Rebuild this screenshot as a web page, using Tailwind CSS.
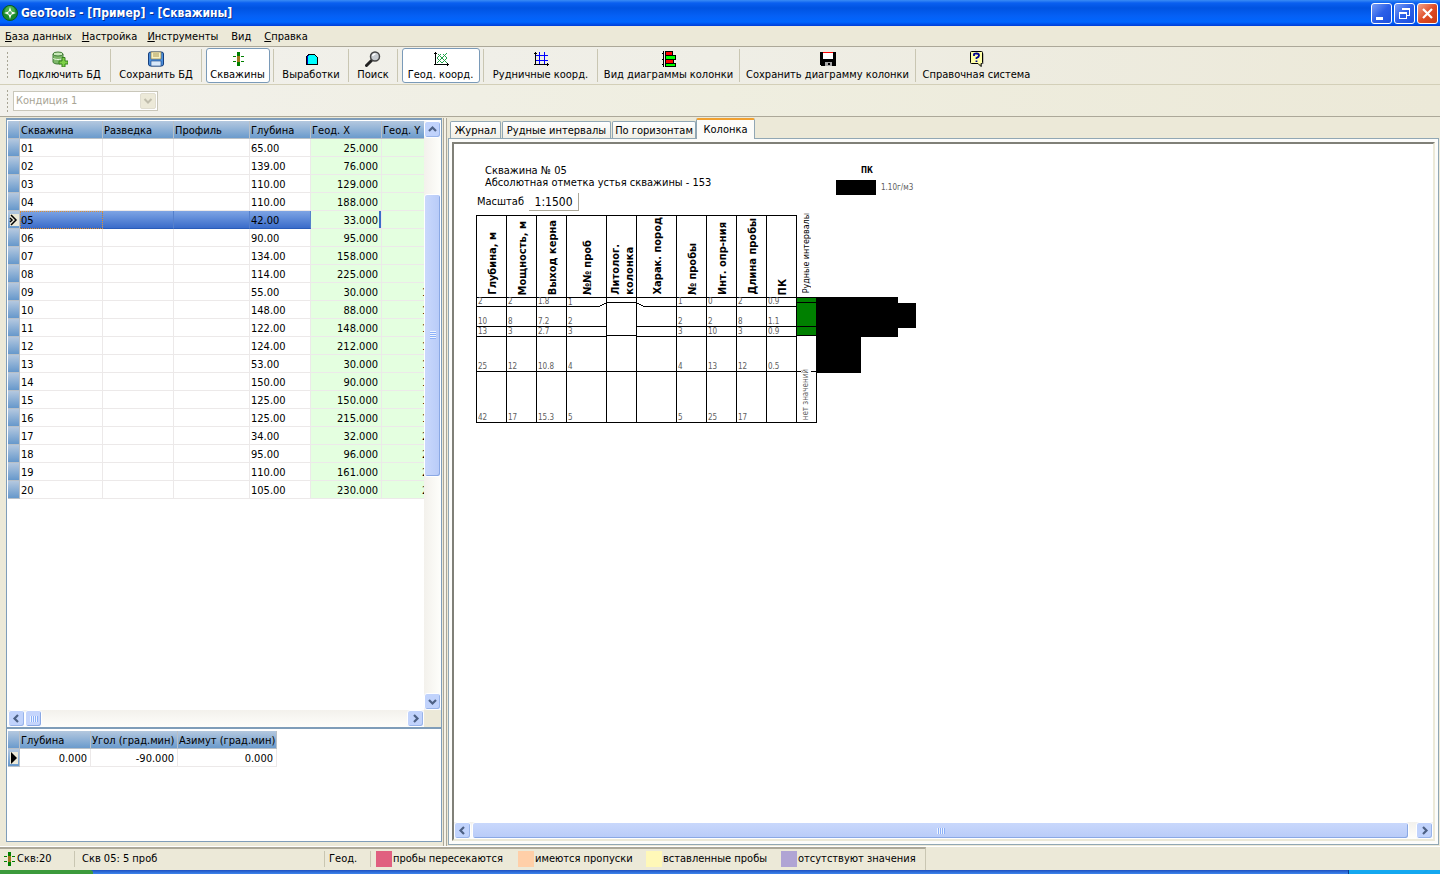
<!DOCTYPE html>
<html lang="ru">
<head>
  <meta charset="UTF-8">
  <title>GeoTools - [Пример] - [Скважины]</title>
  <script src="https://cdn.jsdelivr.net/npm/@tailwindcss/browser@4"></script>
</head>
<body class="h-screen flex flex-col overflow-hidden bg-[#ece9d8] text-black text-[11px] leading-[14px] font-['Tahoma','DejaVu_Sans_Condensed','Noto_Sans',sans-serif]">

  <!-- title bar -->
  <header class="h-[26px] shrink-0 flex items-center pl-0.5 pr-0.5 bg-[linear-gradient(#3a8cf5_0,#0a5ff0_3px,#0053e1_8px,#0560f5_16px,#0066ff_22px,#003dd7_26px)]">
    <svg class="w-4 h-4" viewBox="0 0 16 16"><circle cx="8" cy="8" r="7.5" fill="#1c8a2c" stroke="#0a5a1c"/><circle cx="8" cy="6" r="5" fill="#47b04c"/><path d="M8 2l1.500 4.500L14 8l-4.500 1.500L8 14l-1.500-4.500L2 8l4.500-1.500z" fill="#fff"/><path d="M8 6v4M6 8h4" stroke="#1c8a2c"/></svg>
    <h1 class="ml-[3px] grow text-white text-[12px] leading-4 font-bold whitespace-nowrap [text-shadow:1px_1px_#0a3090]">GeoTools - [Пример] - [Скважины]</h1>
    <div class="flex gap-0.5">
      <button aria-label="Свернуть" class="w-[21px] h-[21px] rounded-[3px] border border-white bg-linear-to-br from-[#7a9cf5] via-[#2c5fe8] to-[#1c50dd]"><svg class="w-[19px] h-[19px]" viewBox="0 0 19 19"><path d="M4 13h7v3H4z" fill="#fff"/></svg></button>
      <button aria-label="Восстановить" class="w-[21px] h-[21px] rounded-[3px] border border-white bg-linear-to-br from-[#7a9cf5] via-[#2c5fe8] to-[#1c50dd]"><svg class="w-[19px] h-[19px]" viewBox="0 0 19 19" shape-rendering="crispEdges" fill="none" stroke="#fff"><path d="M7 6V4.500h7.500V11H12M7 5.500h8"/><path d="M4.500 8.500h7v6h-7zM4 9.500h8"/></svg></button>
      <button aria-label="Закрыть" class="w-[21px] h-[21px] rounded-[3px] border border-white bg-linear-to-br from-[#f0a088] via-[#e04c24] to-[#c83c14]"><svg class="w-[19px] h-[19px]" viewBox="0 0 19 19"><path d="M5 5l9 9M14 5l-9 9" stroke="#fff" stroke-width="2.2"/></svg></button>
    </div>
  </header>

  <!-- menu -->
  <nav class="h-5 shrink-0 flex items-center gap-2.5 pt-0.5 pl-[5px]">
    <a href="#"><u>Б</u>аза данных</a>
    <a href="#"><u>Н</u>астройка</a>
    <a href="#"><u>И</u>нструменты</a>
    <a href="#" class="px-[3px]">Вид</a>
    <a href="#"><u>С</u>правка</a>
  </nav>

  <!-- toolbar -->
  <div class="h-[39px] shrink-0 flex items-stretch pl-1.5 py-[2px] border-t border-b border-t-[#aca899] border-b-[#d3cfb8] bg-linear-to-r from-[#f2f1ec] via-[#efeee6] to-[#ece9d8] whitespace-nowrap">
    <div class="w-[3px] my-0.5 bg-[radial-gradient(circle,#a8a595_1px,transparent_1px)] bg-[size:3px_4px]"></div>
    <button class="w-[102px] flex flex-col items-center justify-end gap-px border-r border-[#c9c6b2]">
      <svg class="w-4 h-4 shrink-0" viewBox="0 0 16 16"><path d="M1 3v8c0 1 2 2 5 2s5-1 5-2V3" fill="#7fb86a" stroke="#3f7a34"/><ellipse cx="6" cy="3" rx="5" ry="2" fill="#c8e8b8" stroke="#3f7a34"/><path d="M1 7c1 2 9 2 10 0" fill="none" stroke="#e8f6e0"/><path d="M10 6.500h3V10h3v3h-3v3h-3v-3H7v-3h3z" fill="#7ed048" stroke="#35801c"/></svg>
      <span>Подключить БД</span>
    </button>
    <button class="w-[91px] flex flex-col items-center justify-end gap-px border-r border-[#c9c6b2]">
      <svg class="w-4 h-4 shrink-0" viewBox="0 0 16 16"><rect x=".5" y="1" width="15" height="14" rx="2" fill="#4a8edc" stroke="#173f7c"/><path d="M3 1h10v7H3z" fill="#f8f0c0" stroke="#806c30" stroke-width=".6"/><path d="M5 3h6M5 5h6" stroke="#a89858"/><path d="M3 10h10v5H3z" fill="#d8e8fa" stroke="#173f7c" stroke-width=".6"/></svg>
      <span>Сохранить БД</span>
    </button>
    <div class="w-[72px] flex justify-center border-r border-[#c9c6b2]">
      <button class="w-16 -my-px flex flex-col items-center justify-end gap-px rounded-[3px] border border-[#7a9ab8] bg-white">
        <svg class="w-4 h-4 shrink-0" viewBox="0 0 16 16" shape-rendering="crispEdges"><path d="M7 1h3v4H7zM7 11h3v4H7zM3 5h3v1H3zM11 5h3v1h-3zM3 10h3v1H3zM11 10h3v1h-3z" fill="#008000"/><path d="M7 5h3v6H7z" fill="#a07820"/></svg>
        <span>Скважины</span>
      </button>
    </div>
    <button class="w-[75px] flex flex-col items-center justify-end gap-px border-r border-[#c9c6b2]">
      <svg class="w-4 h-4 shrink-0" viewBox="0 0 16 16" shape-rendering="crispEdges"><path d="M3 13V6l3-3h5l3 3v7z" fill="#0ff" stroke="#000"/><path d="M4 13V6l2-2" fill="none" stroke="#0000c0"/></svg>
      <span>Выработки</span>
    </button>
    <button class="w-[49px] flex flex-col items-center justify-end gap-px border-r border-[#c9c6b2]">
      <svg class="w-4 h-4 shrink-0" viewBox="0 0 16 16"><path d="M6.500 9.500L1.500 14.500" stroke="#222" stroke-width="3" stroke-linecap="round"/><circle cx="10" cy="5.500" r="4.500" fill="#c8ccd0" stroke="#444" stroke-width="1.500"/><path d="M7.500 5a3 3 0 0 1 3-2" stroke="#fff" fill="none" stroke-width="1.500"/></svg>
      <span>Поиск</span>
    </button>
    <div class="w-[86px] flex justify-center border-r border-[#c9c6b2]">
      <button class="w-[78px] -my-px flex flex-col items-center justify-end gap-px rounded-[3px] border border-[#7a9ab8] bg-white">
        <svg class="w-4 h-4 shrink-0" viewBox="0 0 16 16" shape-rendering="crispEdges"><path d="M2.500 1v13M1 13.500h15M1 2.500h3M14.500 12v3" fill="none" stroke="#000"/><path d="M4 12l10-10M9 12l5-5M4 7l4-4M5 3l9 9M4 7l5 5M10 3l4 4" fill="none" stroke="#20a048"/></svg>
        <span>Геод. коорд.</span>
      </button>
    </div>
    <button class="w-[114px] flex flex-col items-center justify-end gap-px border-r border-[#c9c6b2]">
      <svg class="w-4 h-4 shrink-0" viewBox="0 0 16 16" shape-rendering="crispEdges" fill="none"><path d="M6.500 1v12M11.500 1v12M3 4.500h12M3 9.500h12" stroke="#00f"/><path d="M2.500 1v13M1 13.500h15M1 2.500h3M14.500 12v3" stroke="#000"/></svg>
      <span>Рудничные коорд.</span>
    </button>
    <button class="w-[142px] flex flex-col items-center justify-end gap-px border-r border-[#c9c6b2]">
      <svg class="w-4 h-4 shrink-0" viewBox="0 0 16 16" shape-rendering="crispEdges" stroke="#000"><path d="M4.500 .5h7v4h-7zM4.500 8.500h8v4h-8z" fill="#f00"/><path d="M4.500 4.500h10v4h-10zM4.500 12.500h10v3h-10z" fill="#0f0"/><path d="M2.500 0v16M1 2.500h2M1 8.500h2M1 13.500h2M4 0v16" fill="none"/></svg>
      <span>Вид диаграммы колонки</span>
    </button>
    <button class="w-[176px] flex flex-col items-center justify-end gap-px border-r border-[#c9c6b2]">
      <svg class="w-4 h-4 shrink-0" viewBox="0 0 16 16" shape-rendering="crispEdges"><path d="M0 1h15l1 1v13H1l-1-1z" fill="#000"/><path d="M3 1h10v7H3z" fill="#fff"/><path d="M3 1h10v1H3z" fill="#f00"/><path d="M5 11h7v4H5z" fill="#a8a8a8"/><path d="M8 12h2v2H8z" fill="#000"/></svg>
      <span>Сохранить диаграмму колонки</span>
    </button>
    <button class="w-[121px] flex flex-col items-center justify-end gap-px">
      <svg class="w-4 h-4 shrink-0" viewBox="0 0 16 16"><path d="M3 2.500h11.500V13H13v3l-3-3H3z" fill="#888"/><path d="M1.500 1.500q0-1 1-1h10q1 0 1 1v10q0 1-1 1H12v3l-3-3H2.500q-1 0-1-1z" fill="#ffffa8" stroke="#000"/><path d="M5 5V3.500Q5 2.500 7.500 2.500T10 4.500Q10 6 7.500 7v1M7.500 9.500v1.500" fill="none" stroke="#000090" stroke-width="1.800"/></svg>
      <span>Справочная система</span>
    </button>
  </div>

  <!-- condition selector -->
  <div class="h-8 shrink-0 flex items-center pl-1.5 border-b border-[#aca899] bg-linear-to-r from-[#f2f1ec] via-[#efeee0] to-[#ece9d8]">
    <div class="w-[3px] h-6 bg-[radial-gradient(circle,#a8a595_1px,transparent_1px)] bg-[size:3px_4px]"></div>
    <div class="relative ml-1 w-[145px] h-5">
      <select disabled aria-label="Кондиция" class="block w-full h-full appearance-none pl-0.5 border border-[#c9c7ba] bg-white text-[#a8a595] opacity-100"><option>Кондиция 1</option></select>
      <div class="absolute right-0.5 top-0.5 w-4 h-4 rounded-[2px] border border-[#e0ddd0] bg-[#ece9d8] pointer-events-none"><svg class="w-full h-full" viewBox="0 0 14 14"><path d="M3.500 5l3.500 3.500L10.500 5" fill="none" stroke="#c0bdac" stroke-width="2"/></svg></div>
    </div>
  </div>

  <main class="grow min-h-0 flex pt-px">
    <!-- left side: wells and inclinometry -->
    <section class="w-[442px] shrink-0 flex flex-col pl-1.5 pb-1">
      <div class="grow min-h-0 flex flex-col pt-px pl-px border-2 border-r border-l-1 border-[#7f9db9] bg-white">
        <div class="grow min-h-0 flex">
          <div class="grow min-w-0 overflow-hidden">
            <table class="w-[447px] table-fixed border-separate border-spacing-0 whitespace-nowrap">
              <colgroup><col class="w-3"><col class="w-[83px]"><col class="w-[71px]"><col class="w-[76px]"><col class="w-[61px]"><col class="w-[71px]"><col class="w-[73px]"></colgroup>
              <thead>
                <tr class="h-[18px] text-left bg-linear-to-b from-[#b4c8df] to-[#6698cb]">
                  <th class="border-r border-b border-[#b8c0c8] p-0"></th>
                  <th class="border-r border-b border-[#b8c0c8] pt-0.5 pb-0 pl-px font-normal">Скважина</th>
                  <th class="border-r border-b border-[#b8c0c8] pt-0.5 pb-0 pl-px font-normal">Разведка</th>
                  <th class="border-r border-b border-[#b8c0c8] pt-0.5 pb-0 pl-px font-normal">Профиль</th>
                  <th class="border-r border-b border-[#b8c0c8] pt-0.5 pb-0 pl-px font-normal">Глубина</th>
                  <th class="border-r border-b border-[#b8c0c8] pt-0.5 pb-0 pl-px font-normal">Геод. X</th>
                  <th class="border-r border-b border-[#b8c0c8] pt-0.5 pb-0 pl-px font-normal">Геод. Y</th>
                </tr>
              </thead>
              <tbody id="wells"></tbody>
            </table>
          </div>
          <!-- vertical scrollbar -->
          <div class="w-[17px] shrink-0 flex flex-col bg-linear-to-r from-[#f3f1ec] to-[#fefefb]">
            <button aria-label="Вверх" class="h-[17px] rounded-[3px] border border-white bg-[#c1d3fc] shadow-[inset_-1px_-1px_#98b4ea]"><svg class="w-full h-full" viewBox="0 0 15 15"><path d="M4 9l3.500-3.500L11 9" fill="none" stroke="#4d6185" stroke-width="2.200"/></svg></button>
            <div class="grow relative">
              <div class="absolute inset-x-0 top-[10%] h-[51%] flex items-center justify-center rounded-[3px] border border-white bg-linear-to-r from-[#c9d8fc] to-[#b8cbf8] shadow-[inset_-1px_-1px_#8aa8e4]">
                <div class="w-1.5 h-2 bg-[repeating-linear-gradient(#eef4fe_0_1px,#8cb0f8_1px_2px)]"></div>
              </div>
            </div>
            <button aria-label="Вниз" class="h-[17px] rounded-[3px] border border-white bg-[#c1d3fc] shadow-[inset_-1px_-1px_#98b4ea]"><svg class="w-full h-full" viewBox="0 0 15 15"><path d="M4 6l3.500 3.500L11 6" fill="none" stroke="#4d6185" stroke-width="2.200"/></svg></button>
          </div>
        </div>
        <!-- horizontal scrollbar -->
        <div class="h-[17px] shrink-0 flex pr-[17px] bg-[#ece9d8]">
          <div class="grow flex bg-linear-to-b from-[#f3f1ec] to-[#fefefb]">
            <button aria-label="Влево" class="w-[17px] rounded-[3px] border border-white bg-[#c1d3fc] shadow-[inset_-1px_-1px_#98b4ea]"><svg class="w-full h-full" viewBox="0 0 15 15"><path d="M9 4L5.500 7.500 9 11" fill="none" stroke="#4d6185" stroke-width="2.200"/></svg></button>
            <div class="w-[17px] flex items-center justify-center rounded-[3px] border border-white bg-[#c5d5fc] shadow-[inset_-1px_-1px_#8aa8e4]"><div class="w-2 h-1.5 bg-[repeating-linear-gradient(90deg,#eef4fe_0_1px,#8cb0f8_1px_2px)]"></div></div>
            <button aria-label="Вправо" class="ml-auto w-[17px] rounded-[3px] border border-white bg-[#c1d3fc] shadow-[inset_-1px_-1px_#98b4ea]"><svg class="w-full h-full" viewBox="0 0 15 15"><path d="M6 4l3.500 3.500L6 11" fill="none" stroke="#4d6185" stroke-width="2.200"/></svg></button>
          </div>
        </div>
      </div>
      <div class="h-[113px] shrink-0 pt-0.5 pl-px border border-t-0 border-[#7f9db9] bg-white">
        <table class="w-[269px] table-fixed border-separate border-spacing-0 whitespace-nowrap">
          <colgroup><col class="w-3"><col class="w-[71px]"><col class="w-[87px]"><col class="w-[99px]"></colgroup>
          <tr class="h-[18px] text-left bg-linear-to-b from-[#b4c8df] to-[#6698cb]">
            <th class="border-r border-b border-[#b8c0c8] p-0"></th>
            <th class="border-r border-b border-[#b8c0c8] pt-0.5 pb-0 pl-px font-normal">Глубина</th>
            <th class="border-r border-b border-[#b8c0c8] pt-0.5 pb-0 pl-px font-normal">Угол (град.мин)</th>
            <th class="border-r border-b border-[#b8c0c8] pt-0.5 pb-0 pl-px font-normal">Азимут (град.мин)</th>
          </tr>
          <tr class="h-[18px] text-right">
            <td class="border-r border-b border-[#b8c0c8] p-0 bg-linear-to-b from-[#b4c8df] to-[#6698cb]"><svg class="block ml-0.5 w-2 h-3" viewBox="0 0 8 12"><path d="M0 0h8v12H0z" fill="#ece9d8"/><path d="M1 0v12l6-6z"/></svg></td>
            <td class="border-r border-b border-[#ece9e9] pt-0.5 pb-0 pr-[3px]">0.000</td>
            <td class="border-r border-b border-[#ece9e9] pt-0.5 pb-0 pr-[3px]">-90.000</td>
            <td class="border-r border-b border-[#ece9e9] pt-0.5 pb-0 pr-[3px]">0.000</td>
          </tr>
        </table>
      </div>
    </section>

    <div class="w-1 shrink-0 ml-px border-x border-[#aca899] bg-[#f4f2e8]"></div>

    <!-- right side: tabs -->
    <section class="grow min-w-0 flex flex-col pb-px">
      <div class="h-5 shrink-0 flex items-end pl-[3px] whitespace-nowrap">
        <button class="w-[51px] h-[17px] mr-px pt-0.5 rounded-t-[2px] border border-b-0 border-[#91a7b4] bg-linear-to-b from-white to-[#f0efe6]">Журнал</button>
        <button class="w-[109px] h-[17px] mr-px pt-0.5 rounded-t-[2px] border border-b-0 border-[#91a7b4] bg-linear-to-b from-white to-[#f0efe6]">Рудные интервалы</button>
        <button class="w-[84px] h-[17px] pt-0.5 rounded-t-[2px] border border-b-0 border-[#91a7b4] bg-linear-to-b from-white to-[#f0efe6]">По горизонтам</button>
        <button class="relative z-10 w-[59px] h-[21px] -mb-px rounded-t-[2px] border border-b-0 border-t-2 border-[#91a7b4] border-t-[#f0a030] bg-[#fcfcfa]">Колонка</button>
      </div>
      <div class="grow min-h-0 mx-px p-[3px] border border-[#91a7b4] bg-[#fcfcfa]">
        <div class="h-full flex flex-col border-2 border-t-[#808078] border-l-[#808078] border-r-[#ece9d8] border-b-[#ece9d8] bg-white">
          <div class="grow min-h-0 overflow-hidden flex items-start pt-[21px] pl-[22px]">
            <div>
              <p class="pl-[9px] leading-3">Скважина № 05</p>
              <p class="pl-[9px] leading-3">Абсолютная отметка устья скважины - 153</p>
              <label class="h-[22px] mt-0.5 pl-px flex items-center gap-[5px]">Масштаб
                <input type="text" value="1:1500" class="w-[50px] h-[18px] border-r border-b border-[#aca899] text-center text-[12px]">
              </label>

              <!-- core log -->
              <div class="mt-0.5 flex items-end">
                <table class="w-[321px] table-fixed border-separate border-spacing-0 border-t border-l border-black text-[8px] leading-[8px] text-[#606060]">
                  <colgroup><col class="w-[30px]"><col class="w-[30px]"><col class="w-[30px]"><col class="w-10"><col class="w-[30px]"><col class="w-10"><col class="w-[30px]"><col class="w-[30px]"><col class="w-[30px]"><col class="w-[30px]"></colgroup>
                  <thead><tr id="log-head" class="h-[82px] text-black text-[11px] leading-[14px]"></tr></thead>
                  <tbody id="log-body"></tbody>
                </table>
                <div class="w-5 flex flex-col text-[8px] leading-[10px] whitespace-nowrap">
                  <div class="h-[82px] flex items-end justify-center pb-1 font-['DejaVu_Sans','Noto_Sans',sans-serif]"><span class="[writing-mode:vertical-rl] rotate-180">Рудные интервалы</span></div>
                  <div class="h-[126px] relative border-r border-black">
                    <svg class="w-[19px] h-[126px]" viewBox="0 0 19 126" shape-rendering="crispEdges"><path d="M0 0h19v39H0z" fill="#008000"/><path d="M0 .5h19M0 5.500h19M0 29.500h19M0 38.500h19M0 74.500h19M0 125.500h19" stroke="#000"/></svg>
                    <span class="absolute left-1 bottom-[3px] bg-white text-[#606060] [writing-mode:vertical-rl] rotate-180">нет значений</span>
                  </div>
                </div>
                <svg class="w-[100px] h-[126px]" viewBox="0 0 100 126" shape-rendering="crispEdges"><path d="M0 0h81v6h18v25H81v9H44v36H0z"/></svg>
              </div>
            </div>
            <!-- legend -->
            <div class="-ml-[81px] w-20 text-[8px] leading-[10px]">
              <p class="w-[62px] mt-px text-center font-bold">ПК</p>
              <div class="mt-1 flex items-center gap-[5px] text-[#606060] whitespace-nowrap"><span class="w-10 h-[15px] bg-black"></span>1.10г/м3</div>
            </div>
          </div>
          <div class="h-[17px] shrink-0 flex gap-px bg-linear-to-b from-[#f3f1ec] to-[#fefefb]">
            <button aria-label="Влево" class="w-[17px] rounded-[3px] border border-white bg-[#c1d3fc] shadow-[inset_-1px_-1px_#98b4ea]"><svg class="w-full h-full" viewBox="0 0 15 15"><path d="M9 4L5.500 7.500 9 11" fill="none" stroke="#4d6185" stroke-width="2.200"/></svg></button>
            <div class="grow mr-1.5 flex items-center justify-center rounded-[3px] border border-white bg-linear-to-b from-[#c9d8fc] to-[#b8cbf8] shadow-[inset_-1px_-1px_#8aa8e4]"><div class="w-2 h-1.5 bg-[repeating-linear-gradient(90deg,#eef4fe_0_1px,#8cb0f8_1px_2px)]"></div></div>
            <button aria-label="Вправо" class="w-[17px] rounded-[3px] border border-white bg-[#c1d3fc] shadow-[inset_-1px_-1px_#98b4ea]"><svg class="w-full h-full" viewBox="0 0 15 15"><path d="M6 4l3.500 3.500L6 11" fill="none" stroke="#4d6185" stroke-width="2.200"/></svg></button>
          </div>
        </div>
      </div>
    </section>
  </main>

  <!-- status bar -->
  <footer class="h-6 shrink-0 flex border-t border-white whitespace-nowrap">
    <div class="flex items-center pb-0.5 border-t-2 border-r border-t-[#aca899] border-r-[#c9c6b2]">
      <div class="w-[75px] h-4 flex items-center pl-1 border-r border-[#c9c6b2]"><svg class="w-3 h-[14px] mr-px" viewBox="0 0 12 14" shape-rendering="crispEdges"><path d="M4 0h3v4H4zM4 10h3v4H4zM0 4h3v1H0zM8 4h3v1H8zM0 9h3v1H0zM8 9h3v1H8z" fill="#008000"/><path d="M4 4h3v6H4z" fill="#a07820"/></svg>Скв:20</div>
      <div class="w-[250px] h-4 flex items-center pl-[7px] border-r border-[#c9c6b2]">Скв 05: 5 проб</div>
      <div class="w-[46px] h-4 flex items-center pl-1 border-r border-[#c9c6b2]">Геод.</div>
      <div class="w-[142px] flex items-center gap-px pl-[5px]"><span class="w-4 h-4 bg-[#e06080]"></span>пробы пересекаются</div>
      <div class="w-[128px] flex items-center gap-px pl-[5px]"><span class="w-4 h-4 bg-[#ffcfa8]"></span>имеются пропуски</div>
      <div class="w-[135px] flex items-center gap-px pl-[5px]"><span class="w-4 h-4 bg-[#fff8b8]"></span>вставленные пробы</div>
      <div class="w-[149px] flex items-center gap-px pl-[5px]"><span class="w-4 h-4 bg-[#b0a4d4]"></span>отсутствуют значения</div>
    </div>
  </footer>
  <div class="h-1 shrink-0 flex bg-linear-to-b from-[#1e4fc0] to-[#3f86ee]">
    <div class="w-[93px] rounded-tr-[3px] bg-[#3c9a3c]"></div>
    <div class="ml-auto w-[92px] border-l border-[#0a3a8c] bg-[#14a8f0]"></div>
  </div>

<script>
  const wells = [
    ['01', '65.00', '25.000', ''], ['02', '139.00', '76.000', ''], ['03', '110.00', '129.000', ''], ['04', '110.00', '188.000', ''],
    ['05', '42.00', '33.000', ''], ['06', '90.00', '95.000', ''], ['07', '134.00', '158.000', ''], ['08', '114.00', '225.000', ''],
    ['09', '55.00', '30.000', '1'], ['10', '148.00', '88.000', '1'], ['11', '122.00', '148.000', '1'], ['12', '124.00', '212.000', '1'],
    ['13', '53.00', '30.000', '1'], ['14', '150.00', '90.000', '1'], ['15', '125.00', '150.000', '1'], ['16', '125.00', '215.000', '1'],
    ['17', '34.00', '32.000', '2'], ['18', '95.00', '96.000', '2'], ['19', '110.00', '161.000', '2'], ['20', '105.00', '230.000', '2'],
  ];
  const marker = '<svg class="block ml-px w-2.5 h-3" viewBox="0 0 10 12"><path d="M1 0h9v12H1z" fill="#ece9d8"/><path d="M2 1l5 5-5 5M1 4l2 2-2 2" fill="none" stroke="#000" stroke-width="1.500"/></svg>';

  document.getElementById('wells').innerHTML = wells.map(([name, depth, x, y]) => {
    const sel = name === '05';
    const cell = sel ? 'border-r border-b border-r-[#5580cc] border-b-[#2a5cb8] pt-0.5 pb-0 pl-px bg-linear-to-b from-[#7ea4e4] to-[#3a6cca]' : 'border-r border-b border-[#ece9e9] pt-0.5 pb-0 pl-px';
    const focus = sel ? 'outline-1 -outline-offset-1 outline-dotted outline-[#e09030]' : '';
    return `<tr class="h-[18px]">
      <td class="border-r border-b border-[#b8c0c8] p-0 bg-linear-to-b from-[#b4c8df] to-[#6698cb]">${sel ? marker : ''}</td>
      <td class="${cell} ${focus}">${name}</td><td class="${cell}"></td><td class="${cell}"></td><td class="${cell}">${depth}</td>
      <td class="border-r border-b border-[#ece9e9] pt-0.5 pb-0 pr-[3px] text-right bg-[#e4ffe0] ${sel ? 'shadow-[inset_-2px_0_#3a6cca]' : ''}">${x}</td>
      <td class="border-r border-b border-[#ece9e9] pt-0.5 pb-0 pl-10 bg-[#e4ffe0]">${y}</td>
    </tr>`;
  }).join('');

  const heads = ['Глубина, м', 'Мощность, м', 'Выход керна', '№№ проб', 'Литолог.<br>колонка', 'Харак. пород', '№ пробы', 'Инт. опр-ния', 'Длина пробы', 'ПК'];
  document.getElementById('log-head').innerHTML = heads.map((h) =>
    `<th class="border-r border-b border-black p-0 pb-0.5 pl-0.5 align-bottom font-bold whitespace-nowrap"><div class="flex justify-center"><span class="[writing-mode:vertical-rl] [text-orientation:sideways] rotate-180 text-left">${h}</span></div></th>`
  ).join('');

  const samples = [
    ['2', '2', '1.8', '1', '1', '0', '2', '0.9'],
    ['10', '8', '7.2', '2', '2', '2', '8', '1.1'],
    ['13', '3', '2.7', '3', '3', '10', '3', '0.9'],
    ['25', '12', '10.8', '4', '4', '13', '12', '0.5'],
    ['42', '17', '15.3', '5', '5', '25', '17', ''],
  ];
  const rowHeights = ['h-[9px]', 'h-5', 'h-2.5', 'h-[35px]', 'h-[51px]'];
  // lithology column is drawn apart: its layer borders do not follow the samples
  const lithology = `<td rowspan="5" class="relative border-r border-b border-black p-0">
    <svg class="absolute top-0 -left-10 w-[110px] h-[124px]" viewBox="0 0 110 124" shape-rendering="crispEdges" fill="none" stroke="#000">
      <path d="M0 8.500h32l8-4h29l8 4h32M40 37.500h29M40 73.500h29"/>
    </svg></td>`;
  document.getElementById('log-body').innerHTML = samples.map((s, i) => {
    const td = (v, c = 'border-b') => `<td class="border-r ${c} border-black p-0 pl-px align-bottom">${v}</td>`;
    const side = i === 0 ? '' : 'border-b';
    return `<tr class="${rowHeights[i]}">${td(s[0])}${td(s[1])}${td(s[2])}${td(s[3], side)}${i === 0 ? lithology : ''}${td('', side)}${s.slice(4).map((v) => td(v)).join('')}</tr>`;
  }).join('');
</script>
</body>
</html>
